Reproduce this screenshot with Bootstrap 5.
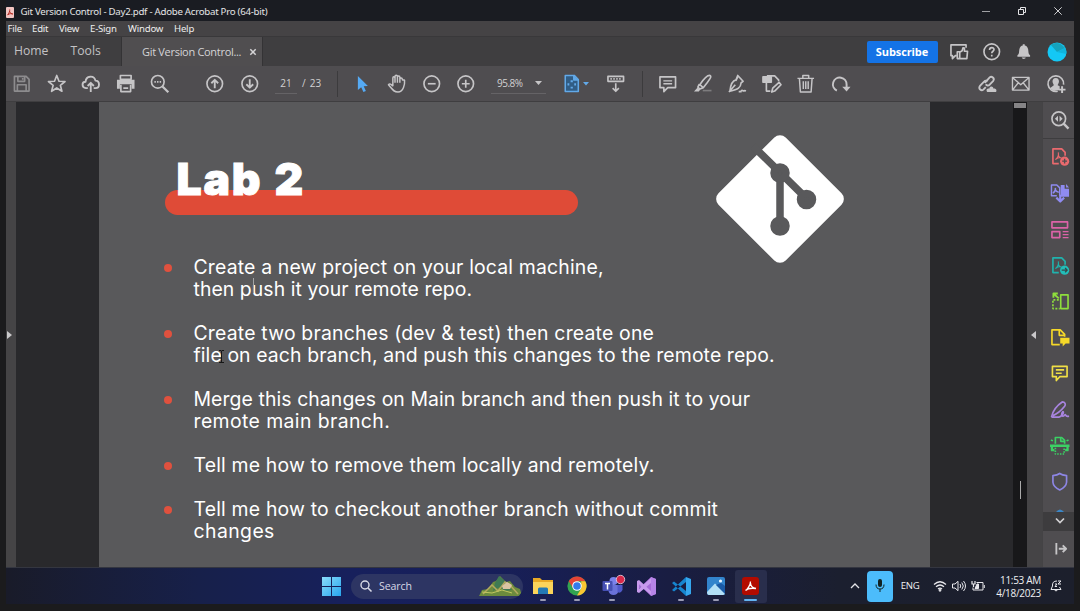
<!DOCTYPE html>
<html lang="en">
<head>
<meta charset="utf-8">
<title>Git Version Control - Day2.pdf</title>
<link href="https://cdn.jsdelivr.net/npm/bootstrap@5.3.0/dist/css/bootstrap.min.css" rel="stylesheet">
<script src="https://cdn.jsdelivr.net/npm/bootstrap@5.3.0/dist/js/bootstrap.bundle.min.js"></script>
<style>
body{width:1080px;height:611px;overflow:hidden;background:#1b1b1d;font-family:"Open Sans","Noto Sans",sans-serif;color:#d2d1d2;line-height:1}
svg{display:block;flex:none;overflow:visible}
.ico{width:19.5px;height:19.5px;fill:none;stroke:#c6c5c7;stroke-width:1.7;stroke-linecap:butt;stroke-linejoin:round}
.desk{width:1080px;height:611px;padding:0 6px 0 6px}
.titlebar{height:21px;background:#1a1c22;font-size:9.7px;color:#e4e4e6;padding-top:3px}
.titlebar span{font-family:"Noto Sans";letter-spacing:-.27px}
.menubar{height:16px;background:#454345;font-family:"Noto Sans";font-size:9.6px;color:#ededed;border-bottom:1px solid #39383a}
.menubar span{letter-spacing:-.2px}
.tabs{height:29px;background:#3f3e40;font-size:12.2px;color:#c3c2c4}
.tab-on{width:142px;background:#504e50;border-left:1px solid #343335;border-right:1px solid #343335}
.subscribe{width:71px;height:22px;background:#1473e6;border-radius:2px;color:#fff;font-weight:700;font-size:11px;letter-spacing:-.1px}
.tools{height:36px;background:#4f4d50;border-bottom:1px solid #3f3e40}
.slot{width:34.5px;flex:none;display:flex;justify-content:center;align-items:center}
.vsep{width:1px;height:26px;background:#3c3b3d}
.num{font-size:10px;height:20px;line-height:19px}
.uline{border-bottom:1px solid #656366}
.stage{height:465px}
.grip{width:10px;background:#454446}
.gutter{width:83px;background:#29292c}
.sheet{width:831px;background:#59595b;color:#fff;font-family:"Inter",sans-serif}
.track{width:14px;background:#18181a}
.strip{width:15px;background:#454446}
.rail{width:32px;background:#4f4d50;border-left:1px solid #444345}
.rail .cell{height:36.1px;flex:none;display:flex;align-items:center;justify-content:center;padding-left:2px}
.banner{width:413px;height:25px;border-radius:13px;background:#df4b37;margin:88px 0 0 66px}
.banner div{font-weight:900;font-size:44.5px;line-height:44px;margin:-33px 0 0 11.5px;height:44px;white-space:nowrap;letter-spacing:1.8px;word-spacing:1.5px;-webkit-text-stroke:1px #fff}
.gitlogo{margin:-82.500px 0 0 615px}
.points{margin:-8.500px 0 0 64px;padding:0;list-style:none;font-size:19.4px;line-height:22px;white-space:nowrap}
.points li{padding-left:30.5px;margin-bottom:22px;position:relative}
.points li::before{content:"";position:absolute;left:1px;top:8px;width:8px;height:8px;border-radius:50%;background:#e0513e}
.l1{letter-spacing:.17px}.l2{letter-spacing:.07px}.l3{letter-spacing:.2px}.l4{letter-spacing:.11px}.l5{letter-spacing:.09px}
.l6{letter-spacing:.41px}.l7{letter-spacing:.18px}.l8{letter-spacing:.19px}.l9{letter-spacing:.42px}
.ibeam{position:absolute}
.taskbar{height:37px;background:linear-gradient(90deg,#191b29 0,#17204a 18%,#17205c 32%,#171f5a 45%,#191d42 62%,#1b1f2f 78%,#1c1f2c 100%);border-top:1px solid #343640}
.find{width:172px;height:25px;border-radius:13px;background:#2d3563;font-size:10.6px;color:#d7d9e6;overflow:hidden}
.app{width:34.7px;height:33px;flex:none;display:flex;align-items:center;justify-content:center;position:relative}
.app.run::after{content:"";position:absolute;bottom:2px;left:14.5px;width:6px;height:2px;border-radius:1px;background:#9a9bb4}
.app.on{background:#292e4c;border-radius:3px;width:32px;margin-left:1.3px}
.app.on::after{left:9.5px;width:13px;background:#63b4f2}
.mic{width:26px;height:31px;border-radius:4px;background:#4cbcfb}
.clock{font-size:10px;line-height:13px;text-align:right;color:#f0f0f2;width:60px;white-space:nowrap;letter-spacing:-.3px;padding-top:1px}
</style>
</head>
<body>
<div class="desk d-flex flex-column">
  <header class="titlebar d-flex align-items-center">
    <svg width="8" height="11" viewBox="0 0 8 11"><rect width="8" height="11" rx="1" fill="#f3c6c3"/><path d="M1.4 8.2C3 6.500 4 4 3.700 2.500M3.800 4.500C4.500 6.500 5.500 7 7 7M2 7.500C4 6.500 5 6.500 6.500 6.800" stroke="#b3261e" fill="none" stroke-width="1"/></svg>
    <span style="margin-left:6.500px">Git Version Control - Day2.pdf - Adobe Acrobat Pro (64-bit)</span>
    <div class="d-flex ms-auto align-items-center" style="margin-top:-3px;margin-right:12px">
      <svg width="8" height="8"><path d="M0 4.500h8" stroke="#9fa0a4"/></svg>
      <svg width="8" height="8" style="margin-left:28px"><path d="M.5 2.500h5v5h-5zM2.500 2.500v-2h5v5h-2" fill="none" stroke="#e3e3e5"/></svg>
      <svg width="8" height="8" style="margin-left:28px"><path d="M.3.300l7.400 7.400M7.700.300.300 7.700" stroke="#cfcfd2"/></svg>
    </div>
  </header>
  <nav class="menubar d-flex align-items-center">
    <span style="margin-left:1.500px;width:24.500px">File</span><span style="width:27px">Edit</span><span style="width:31px">View</span><span style="width:38px">E-Sign</span><span style="width:46px">Window</span><span>Help</span>
  </nav>
  <div class="tabs d-flex align-items-stretch">
    <div class="d-flex align-items-center" style="width:115px;padding-left:8px"><span style="width:56.500px">Home</span><span>Tools</span></div>
    <div class="tab-on d-flex align-items-center"><span class="text-nowrap" style="margin-left:20px;font-size:11px;letter-spacing:-.3px;width:103px;color:#d5d4d6">Git Version Control...</span><svg width="6" height="6" style="margin-left:5px"><path d="M.3.300l5.400 5.400M5.700.300.300 5.700" stroke="#d5d4d6" stroke-width="1.500"/></svg></div>
    <div class="d-flex align-items-center ms-auto" style="margin-right:1px">
      <div class="subscribe d-flex align-items-center justify-content-center">Subscribe</div>
      <div class="slot" style="margin-left:4.500px;width:33px"><svg class="ico" viewBox="0 0 20 20"><path d="M8 14H6.500l-3 3v-3H2V3h15.500v3" /><path d="M8.500 10h2.500v7h-2.500zM11 10.500l2.500-1.500.8-3 1.500.3v3.200H19l-.7 7.500H11" /></svg></div>
      <div class="slot" style="width:32.500px"><svg class="ico" viewBox="0 0 20 20"><circle cx="10" cy="10" r="8"/><path d="M7.700 8.200C7.800 4.900 12.500 5 12.300 8c-.1 1.500-2.300 1.600-2.300 3.600M10 13v1.800"/></svg></div>
      <div class="slot" style="width:32.500px"><svg class="ico" viewBox="0 0 20 20"><path d="M3.500 15v-1.500c2-1 1.500-3 2-6C6 5 7.500 4 9 3.700V2.300h2v1.400c1.500.3 3 1.300 3.500 3.800.5 3 0 5 2 6V15zM8 16h4c-.3 2-3.700 2-4 0z" fill="#c6c5c7" stroke="none"/></svg></div>
      <div class="slot" style="width:33px"><svg width="20" height="20"><circle cx="10" cy="10" r="9.500" fill="#14c8f5"/><path d="M10 10L3.500 2.500Q12-2 18 6z" fill="#15a3bd"/><path d="M10 10l8-4Q20 9 19.300 12z" fill="#0fb4dc"/></svg></div>
    </div>
  </div>
  <div class="tools d-flex align-items-center">
    <div class="slot" style="margin-left:-1.250px"><svg class="ico" viewBox="0 0 20 20" style="stroke:#8d8c8e"><path d="M2.500 2.500h12l3 3v12h-15zM6 2.500v5h7v-5M5.500 17.500V11h9v6.500M11 4v2"/></svg></div>
    <div class="slot"><svg class="ico" viewBox="0 0 20 20"><path d="M10 1.500l2.300 5.900 6.200.3-4.800 3.900 1.600 6.100L10 14.300l-5.300 3.400 1.600-6.100L1.500 7.700l6.200-.3z"/></svg></div>
    <div class="slot"><svg class="ico" viewBox="0 0 20 20"><path d="M7 14.500H5c-4.500-.3-4.500-6.500-.3-6.600C5 1.500 13.500 1 14.800 6.800c5 .2 4.700 7.500.2 7.700h-2M10 18.500V9.500M6.800 12.300L10 9l3.200 3.300" stroke-width="1.900"/></svg></div>
    <div class="slot" style="width:34px"><svg class="ico" viewBox="0 0 20 20"><path d="M4.500 1.500h11v4h-11z" fill="none"/><path d="M1 6h18v9h-3v-4.500H4V15H1z" fill="#c6c5c7" stroke="none"/><path d="M5 11v7h10v-7M7.500 14.500h5"/></svg></div>
    <div class="slot" style="width:35px"><svg class="ico" viewBox="0 0 20 20"><circle cx="8" cy="8" r="6.500"/><path d="M12.800 12.800l6 6" stroke-width="2.300"/><path d="M4.500 8h7" stroke-dasharray="1.500 1.200"/></svg></div>
    <div class="slot" style="margin-left:20.500px"><svg class="ico" viewBox="0 0 20 20"><circle cx="10" cy="10" r="8"/><path d="M10 14.500v-8M6.500 9.500L10 6l3.500 3.500" stroke-width="1.900"/></svg></div>
    <div class="slot"><svg class="ico" viewBox="0 0 20 20"><circle cx="10" cy="10" r="8"/><path d="M10 5.500v8M6.500 10.500L10 14l3.500-3.500" stroke-width="1.900"/></svg></div>
    <div class="num uline text-center" style="margin-left:8.250px;width:22px">21</div>
    <div class="num text-nowrap" style="width:40px;padding-left:5px;word-spacing:2px;letter-spacing:-.2px">/ 23</div>
    <div class="vsep"></div>
    <div class="slot" style="margin-left:7.250px"><svg class="ico" viewBox="0 0 20 20"><path d="M5 2v14.500l3.400-3 2.300 5 2.500-1-2.200-4.900 4.300-.2z" fill="#55aaf4" stroke="none"/></svg></div>
    <div class="slot"><svg class="ico" viewBox="0 0 20 20"><path d="M6 12.500V4c0-1.500 2-1.500 2.200 0V9M8.200 4V2.500c0-1.600 2.500-1.600 2.500 0V9M10.700 3c.3-1.500 2.500-1.300 2.500.3V9M13.200 5c.3-1.300 2.500-1.300 2.500.3 0 2 2 0 2.300 1 .4 4-1 12.200-6.700 12.200-5 0-5.800-3-9.800-7.500 1.200-1.500 2.800-.5 4.500 1.500" stroke-width="1.500"/></svg></div>
    <div class="slot"><svg class="ico" viewBox="0 0 20 20"><circle cx="10" cy="10" r="8"/><path d="M6 10h8"/></svg></div>
    <div class="slot"><svg class="ico" viewBox="0 0 20 20"><circle cx="10" cy="10" r="8"/><path d="M6 10h8M10 6v8"/></svg></div>
    <div class="num uline d-flex align-items-center" style="margin-left:7.750px;width:55px;padding-left:6px;letter-spacing:-.5px">95.8%<svg width="7" height="4" style="margin-left:auto;margin-right:4.500px"><path d="M0 0h7L3.500 4z" fill="#c6c5c7"/></svg></div>
    <div class="d-flex align-items-center" style="margin-left:17px;width:27px"><svg class="ico" viewBox="0 0 20 20" style="stroke:#62a9e8;width:18px;height:19px"><path d="M2.500 1h10L17 5.500V19H2.500z" fill="#315d85"/><path d="M12 1v5h5" fill="#62a9e8"/><path d="M9.700 6.500v2M9.700 13.500v2M5 11h2M12.500 11h2" stroke-width="2.500"/></svg><svg width="6" height="4" style="margin-left:2px"><path d="M0 0h6L3 3.500z" fill="#62a9e8"/></svg></div>
    <div class="slot" style="margin-left:8.750px"><svg class="ico" viewBox="0 0 20 20"><path d="M2 2.500h16v5H2z"/><path d="M4.500 5h11" stroke-dasharray="1.500 1.500"/><path d="M10 9.500v8M6.800 14.500L10 17.700l3.200-3.200"/></svg></div>
    <div class="vsep" style="margin-left:8.750px"></div>
    <div class="slot" style="margin-left:7.750px"><svg class="ico" viewBox="0 0 20 20"><path d="M2 3h16v11h-8l-4 4v-4H2z"/><path d="M5.500 7h9M5.500 10h9" stroke-width="1.300"/></svg></div>
    <div class="slot"><svg class="ico" viewBox="0 0 20 20"><path d="M17.500 1.500c1.500 1 1 2-3 7.500l-4 5-3.500-3C11 5 15 1 17.500 1.500zM6.500 10.500l-1.500 3 2 2 3.500-1.500" /><path d="M4.500 14l-3.500 4h5l1.500-2z" fill="#c6c5c7" stroke="none"/><path d="M10 17h9" stroke="#7d7c7e"/></svg></div>
    <div class="slot"><svg class="ico" viewBox="0 0 20 20"><path d="M11 1.500l5.500 6-2 1.500c-.5 5-3 7-11.500 8.500C3.500 12 5 7 9.300 6zM2 18.500l6.500-7.500M11 3l-2 4M14.500 17.500c1.500-2 2 1 3.500-.5l1.500.5M12 18h3"/></svg></div>
    <div class="slot"><svg class="ico" viewBox="0 0 20 20"><path d="M1 3h8.500v5.500H1z" fill="#c6c5c7"/><path d="M5 2h8l4 4v1.500M4.500 9v8.500H8.500M10 18.500l1-4 6.500-6 2 2.500L13 17.500z"/></svg></div>
    <div class="slot"><svg class="ico" viewBox="0 0 20 20"><path d="M1.500 4.500h17M7 4.500v-3h6v3M3.500 4.500L4.500 18.500h11l1-14M7.500 7.500v8M12.500 7.500v8M10 7.500v8" stroke-width="1.500"/></svg></div>
    <div class="slot"><svg class="ico" viewBox="0 0 20 20"><path d="M6 17A7 7 0 1 1 16 11v4" stroke-width="2"/><path d="M11.500 13h8.500l-4 5z" fill="#c6c5c7" stroke="none"/></svg></div>
    <div class="slot ms-auto"><svg class="ico" viewBox="0 0 20 20"><path d="M8 9l5-5.500c2-2 5.500 1 3.700 3.500L13 11c-1.500 1.300-3 1-4-.5M11 7.500c-1.500-1-3-.5-4 .5l-4 4.300c-2 3 1.500 5.500 3.500 3.700L9 13.500" stroke-width="1.900"/><path d="M10.500 18.500c-2-3 1-4 2-3.500 1-3 4-2.500 4.500 0 3-.3 3.500 2.500 2.500 3.500z" fill="#c6c5c7" stroke="none"/></svg></div>
    <div class="slot"><svg class="ico" viewBox="0 0 20 20"><path d="M1.500 3.500h17v13h-17zM1.500 3.500L10 11l8.500-7.500M1.500 16.500l6-7.500M18.500 16.500l-6-7.500" stroke-width="1.400"/></svg></div>
    <div class="slot" style="margin-right:1.250px"><svg class="ico" viewBox="0 0 20 20"><path d="M12 17.700A8 8 0 1 1 18 11"/><path d="M10 4c2.500 0 3.500 2 3.300 4-.1 1.500-1.300 2.500-1.300 3.500l2 1v4L8 17.500l-4-3 4-3C8 10.500 6.800 9.500 6.700 8 6.500 6 7.500 4 10 4z" fill="#c6c5c7" stroke="none"/><path d="M16.500 12.500v7M13 16h7" stroke-width="2"/></svg></div>
  </div>
  <main class="stage d-flex">
    <div class="grip d-flex align-items-center"><svg width="5" height="8"><path d="M1 0l5 4-5 4z" fill="#c9c8ca"/></svg></div>
    <div class="gutter"></div>
    <section class="sheet">
      <div class="banner d-flex"><div>Lab 2</div></div>
      <svg class="gitlogo" width="132" height="132" viewBox="0 0 132 132">
        <rect x="18.500" y="18.500" width="95" height="95" rx="8" fill="#fff" transform="rotate(45 66 66)"/>
        <g stroke="#59595b" stroke-width="7.500" fill="#59595b"><path d="M39 13l54 53M66 40v53" fill="none"/><circle cx="66" cy="40" r="6"/><circle cx="66" cy="93" r="6"/><circle cx="92.500" cy="66.500" r="6"/></g>
      </svg>
      <ul class="points">
        <li><span class="l1">Create a new project on your local machine,</span><br><span class="l2">then push it your remote repo.</span><svg class="ibeam" width="1" height="15" style="left:90px;top:22px"><path d="M.5 0v15" stroke="#a3a3a5"/></svg></li>
        <li><span class="l3">Create two branches (dev &amp; test) then create one</span><br><span class="l4">file on each branch, and push this changes to the remote repo.</span><svg class="ibeam" width="5" height="13" style="left:56px;top:28px"><path d="M0 .5h2l.5.500.500-.500h2M2.500 1v11M0 12.500h5" stroke="#161616" fill="none"/></svg></li>
        <li><span class="l5">Merge this changes on Main branch and then push it to your</span><br><span class="l6">remote main branch.</span></li>
        <li><span class="l7">Tell me how to remove them locally and remotely.</span></li>
        <li><span class="l8">Tell me how to checkout another branch without commit</span><br><span class="l9">changes</span></li>
      </ul>
    </section>
    <div class="gutter"></div>
    <div class="track d-flex flex-column justify-content-between"><div style="height:5px;margin:1px 1px 0;background:#858486"></div><div style="width:1px;height:18px;background:#aaa;margin:0 0 68px 7px"></div></div>
    <div class="strip d-flex align-items-center justify-content-center"><svg width="5" height="8"><path d="M4 0L-1 4l5 4z" fill="#c9c8ca"/></svg></div>
    <aside class="rail d-flex flex-column">
      <div class="cell"><svg class="ico" viewBox="0 0 20 20"><circle cx="9" cy="9" r="7"/><path d="M14 14l5 5" stroke-width="2.500"/><path d="M8.200 6v6L5 9zM9.800 6v6L13 9z" fill="#c6c5c7" stroke="none"/></svg></div>
      <div class="cell" style="margin-top:1px;box-shadow:0 -1px #3e3d3f"><svg class="ico" viewBox="0 0 20 20" style="stroke:#ea6a6e"><path d="M9 17H3V2h9l3.500 3.500V9"/><path d="M5.500 13c2.500-2 3.500-5 3-7.500M8.500 8c.5 2.500 2 3.500 4.500 3.500M5.500 13c2-1.500 3-2 5-2.200" stroke-width="1.100"/><circle cx="15" cy="14.500" r="4.700" fill="#ea6a6e" stroke="none"/><path d="M12.500 14.500h5M15 12v5" stroke="#4f4d50" stroke-width="1.400"/></svg></div>
      <div class="cell"><svg class="ico" viewBox="0 0 20 20" style="stroke:#8f8bf0"><path d="M7 13H1.500V2H7l3 3v8M3 10.500C5 9 6 7 5.500 5M5.500 7c.5 1.500 1.500 2.300 3.500 2.500" stroke-width="1.500"/><path d="M11 2h4v4h4.500v8H11z" fill="#8f8bf0" stroke="none"/><path d="M16.500 1l3 3.500h-3z" fill="#8f8bf0" stroke="none"/><path d="M10.500 12v7M6.500 15l4 4 4-4" stroke-width="2.200"/></svg></div>
      <div class="cell"><svg class="ico" viewBox="0 0 20 20" style="stroke:#dc63a8"><path d="M2 2h16v6H2zM2 12h8v6H2z"/><path d="M13 12h6M13 15h6M13 18h6" stroke-width="1.200"/></svg></div>
      <div class="cell"><svg class="ico" viewBox="0 0 20 20" style="stroke:#20b2ad"><path d="M9 17H3V2h9l3.500 3.500V9"/><path d="M5.500 13c2.500-2 3.500-5 3-7.500M8.500 8c.5 2.500 2 3.500 4.500 3.500M5.500 13c2-1.500 3-2 5-2.200" stroke-width="1.100"/><circle cx="15" cy="14.500" r="4.700" fill="#22bdb8" stroke="none"/><path d="M12 14.500h5.500M15.500 12.300l2.200 2.200-2.200 2.200" stroke="#34494b" stroke-width="1.300"/></svg></div>
      <div class="cell"><svg class="ico" viewBox="0 0 20 20" style="stroke:#8ede3c"><path d="M11 3h7.500v14H11z"/><path d="M9 8H3v9h7" stroke-dasharray="2 1.500"/><path d="M9 6.500L4 2M3.500 6V1.500H8" stroke-width="1.900"/></svg></div>
      <div class="cell"><svg class="ico" viewBox="0 0 20 20" style="stroke:#f5d829"><path d="M10 17H2V2h8.500L15 6.500V9M9.500 2v5.500H15"/><path d="M10.500 10H20v6h-4l-3 3v-3h-2.500z" fill="#f5d829" stroke="none"/></svg></div>
      <div class="cell"><svg class="ico" viewBox="0 0 20 20" style="stroke:#f0df45"><path d="M2.500 2.500h15v10.500H10l-3.500 4V13h-4z"/><path d="M6 6h8.500M6 9.500h6"/></svg></div>
      <div class="cell"><svg class="ico" viewBox="0 0 20 20" style="stroke:#a884df"><path d="M1.500 17.500c1.500-7 5-11.500 11-15.500 3 0 4 2.500 2.500 4.500-4 5-8 8-12 9.500M1.500 17.500h8c3-1 5-5 4-5.500s-2.500 4-.5 4.500 2-2 2.800-1.500-.2 2.500 3.700 1.500"/></svg></div>
      <div class="cell"><svg class="ico" viewBox="0 0 20 20" style="stroke:#3bd164"><path d="M5.500 8V1.500H12L15 4.500V8"/><path d="M0 10h20M2 10v4.500h2.500M18 10v4.500h-2.500" stroke-width="2.400"/><path d="M5.500 12v6.500h9V12" stroke-dasharray="1.500 1.300"/><path d="M1 4l2 1M17 5l2-1"/><path d="M11 2v3.500h4"/></svg></div>
      <div class="cell"><svg class="ico" viewBox="0 0 20 20" style="stroke:#8d86e4"><path d="M10 1.500c2 1.500 4.500 2 7 2.200v6.800c-.3 4-4 6.500-7 8-3-1.500-6.700-4-7-8V3.700c2.500-.2 5-.7 7-2.200z"/></svg></div>
      <div class="flex-grow-1 d-flex justify-content-center align-items-end overflow-hidden" style="padding-left:2px"><svg width="8" height="3"><path d="M0 3q4-5 8 0z" fill="#3b86c6"/></svg></div>
      <div class="d-flex align-items-center justify-content-center" style="height:19px;flex:none;background:#3d3c3e;padding-left:2px"><svg width="10" height="6"><path d="M1 .500l4 4 4-4" stroke="#d2d1d3" stroke-width="1.700" fill="none"/></svg></div>
      <div class="cell" style="padding-left:5px"><svg class="ico" viewBox="0 0 20 20"><path d="M5.500 4v12M8 10h7M12 6.500l3.500 3.500-3.500 3.500" stroke-width="1.900"/></svg></div>
    </aside>
  </main>
  <footer class="taskbar d-flex align-items-center">
    <svg width="19" height="19" style="margin-left:315.500px"><defs><linearGradient id="win" x2="1" y2="1"><stop stop-color="#8adcfb"/><stop offset="1" stop-color="#27a5ee"/></linearGradient></defs><path d="M0 0h9v9H0zM10 0h9v9h-9zM0 10h9v9H0zM10 10h9v9h-9z" fill="url(#win)"/></svg>
    <div class="find d-flex align-items-center" style="margin-left:10.500px">
      <svg width="12" height="12" style="margin-left:9px"><circle cx="5" cy="5" r="4" fill="none" stroke="#d7d9e6" stroke-width="1.400"/><path d="M8 8l3.500 3.500" stroke="#d7d9e6" stroke-width="1.600"/></svg>
      <span style="margin-left:7px;letter-spacing:-.1px">Search</span>
      <svg width="44" height="20" viewBox="0 0 44 20" class="ms-auto"><path d="M0 20l3-6 6-1 5-7 3-1 4-5 6 6 4-1 5 6 5 2 2 7z" fill="#6c8b3d"/><path d="M20 0l7 6 6 8-7 1-5-4-7 4 2-8z" fill="#3f7a54"/><path d="M4 18l9-9 6 6 7-9 5 3 8 9" fill="none" stroke="#b4a95f" stroke-width="1.500"/><path d="M23 10l5-4 5 3-2 4h-7z" fill="#d9c4a2"/><path d="M3 16l10 1 10-3 10 3" stroke="#c2c760" fill="none"/></svg>
    </div>
    <div class="app run" style="margin-left:2.200px"><svg width="20" height="18"><path d="M0 1h7l2 2h11v14H0z" fill="#e8a925"/><path d="M0 5h20v12H0z" fill="#fbd45b"/><path d="M5 17v-5q0-1.500 1.500-1.500h7q1.500 0 1.500 1.500v5z" fill="#2379b5"/></svg></div>
    <div class="app run"><svg width="20" height="20" viewBox="0 0 20 20"><circle cx="10" cy="10" r="9.600" fill="#32a350"/><path d="M1.700 5.200A9.600 9.600 0 0 1 18.300 5.200H10L6 12z" fill="#e54335"/><path d="M18.300 5.200A9.600 9.600 0 0 1 10 19.600l4.200-7.200V5.200z" fill="#fbc632"/><circle cx="10" cy="10" r="4.800" fill="#fff"/><circle cx="10" cy="10" r="3.800" fill="#347bea"/></svg></div>
    <div class="app run"><svg width="22" height="20" viewBox="-1.500 0 22 20"><circle cx="11" cy="5" r="4" fill="#7b83eb"/><path d="M7 9h9v6q-1 4-5 4t-5-4z" fill="#6a72d9"/><path d="M15 9h5v5q-2 4-5 2z" fill="#5059c9"/><rect y="5" width="10" height="10" rx="1" fill="#4650b4"/><path d="M2.500 7.500h5M5 7.500v6" stroke="#fff" stroke-width="1.500"/><circle cx="18" cy="3.500" r="4.200" fill="#d8284a" stroke="#e9d9e4" stroke-width=".8"/></svg></div>
    <div class="app"><svg width="19" height="19" viewBox="0 0 19 19"><path d="M14 0l5 2v15l-5 2L4.500 10 2 12V7l2.500 2z" fill="#a56bd6"/><path d="M0 4l2-1 12 11v4L2 7.500V12l2-2 10-9v5L2 16l-2-1z" fill="#c79aec"/><path d="M14 0l5 2v15l-5 2z" fill="#b684e6"/></svg></div>
    <div class="app run"><svg width="19" height="19" viewBox="0 0 19 19"><path d="M14 0l5 2v15l-5 2z" fill="#35a7ee"/><path d="M0 6l2-1.500L14 14v5zM0 13l2 1.500L14 5V0z" fill="#1685cf"/></svg></div>
    <div class="app run"><svg width="18" height="18"><rect width="18" height="18" rx="2" fill="#3284cc"/><path d="M0 15L8 6.500l10 9.500q0 2-2 2H2q-2 0-2-3z" fill="#b3e0f7"/><path d="M9 8l9 9V9l-4-3z" fill="#1b5aa5"/><circle cx="13.500" cy="4" r="1.600" fill="#eaf6ff"/></svg></div>
    <div class="app run on"><svg width="17" height="18"><rect width="17" height="18" rx="3" fill="#b30b00"/><path d="M3.500 13.500C5.500 12.500 8.500 8 8.500 4.500M8.500 6c0 3 2.500 5 5.500 5.500M3.500 13.500c2-2 7-2.500 10.500-2" stroke="#fff" fill="none" stroke-width="1.300"/></svg></div>
    <div class="ms-auto d-flex align-items-center" style="margin-right:12px">
      <svg width="10" height="6"><path d="M1 5l4-4 4 4" stroke="#e4e4e8" stroke-width="1.300" fill="none"/></svg>
      <div class="mic d-flex align-items-center justify-content-center" style="margin-left:7px"><svg width="10" height="14"><rect x="3" width="4" height="8" rx="2" fill="#122"/><path d="M1 5.500q0 4.500 4 4.500t4-4.500M5 10v3" stroke="#122" fill="none"/></svg></div>
      <span class="text-center" style="font-size:9.600px;width:34px;color:#f0f0f2;letter-spacing:-.3px">ENG</span>
      <svg width="14" height="12" viewBox="0 0 14 12" style="margin-left:6px" fill="none" stroke="#e8e8ec" stroke-width="1.200"><path d="M1 4.500q6-5.500 12 0M3 6.800q4-3.600 8 0M5 9q2-1.800 4 0"/><circle cx="7" cy="10.300" r=".8"/></svg>
      <svg width="14" height="12" viewBox="0 0 14 12" style="margin-left:5px" fill="none" stroke="#e8e8ec"><path d="M.5 4v4h2.500l3 2.700V1.300L3 4zM8 4q1.500 2 0 4M9.800 2.500q3 3.500 0 7M11.500 1q4 5 0 10"/></svg>
      <svg width="14" height="12" viewBox="0 0 14 12" style="margin-left:5px" fill="none" stroke="#e8e8ec"><path d="M5.500 2.500h6.500v7.500H2V7.500M13.300 5v3"/><path d="M4 8.500h3.500V4H6z" fill="#e8e8ec"/><path d="M1 1v3h3V1M2.500 4v3" stroke-width="1.200"/></svg>
      <div class="clock" style="margin-left:-4px">11:53 AM<br>4/18/2023</div>
      <svg width="12" height="12" viewBox="0 0 12 12" style="margin-left:9px" fill="none" stroke="#e8e8ec"><path d="M7 1Q2 1 2.500 6L1 9.500h10L9.500 7M4.500 10q1.500 2 3 0M8 1h3L8 4h3M5 4h2L5 6.500h2"/></svg>
    </div>
  </footer>
</div>
</body>
</html>
